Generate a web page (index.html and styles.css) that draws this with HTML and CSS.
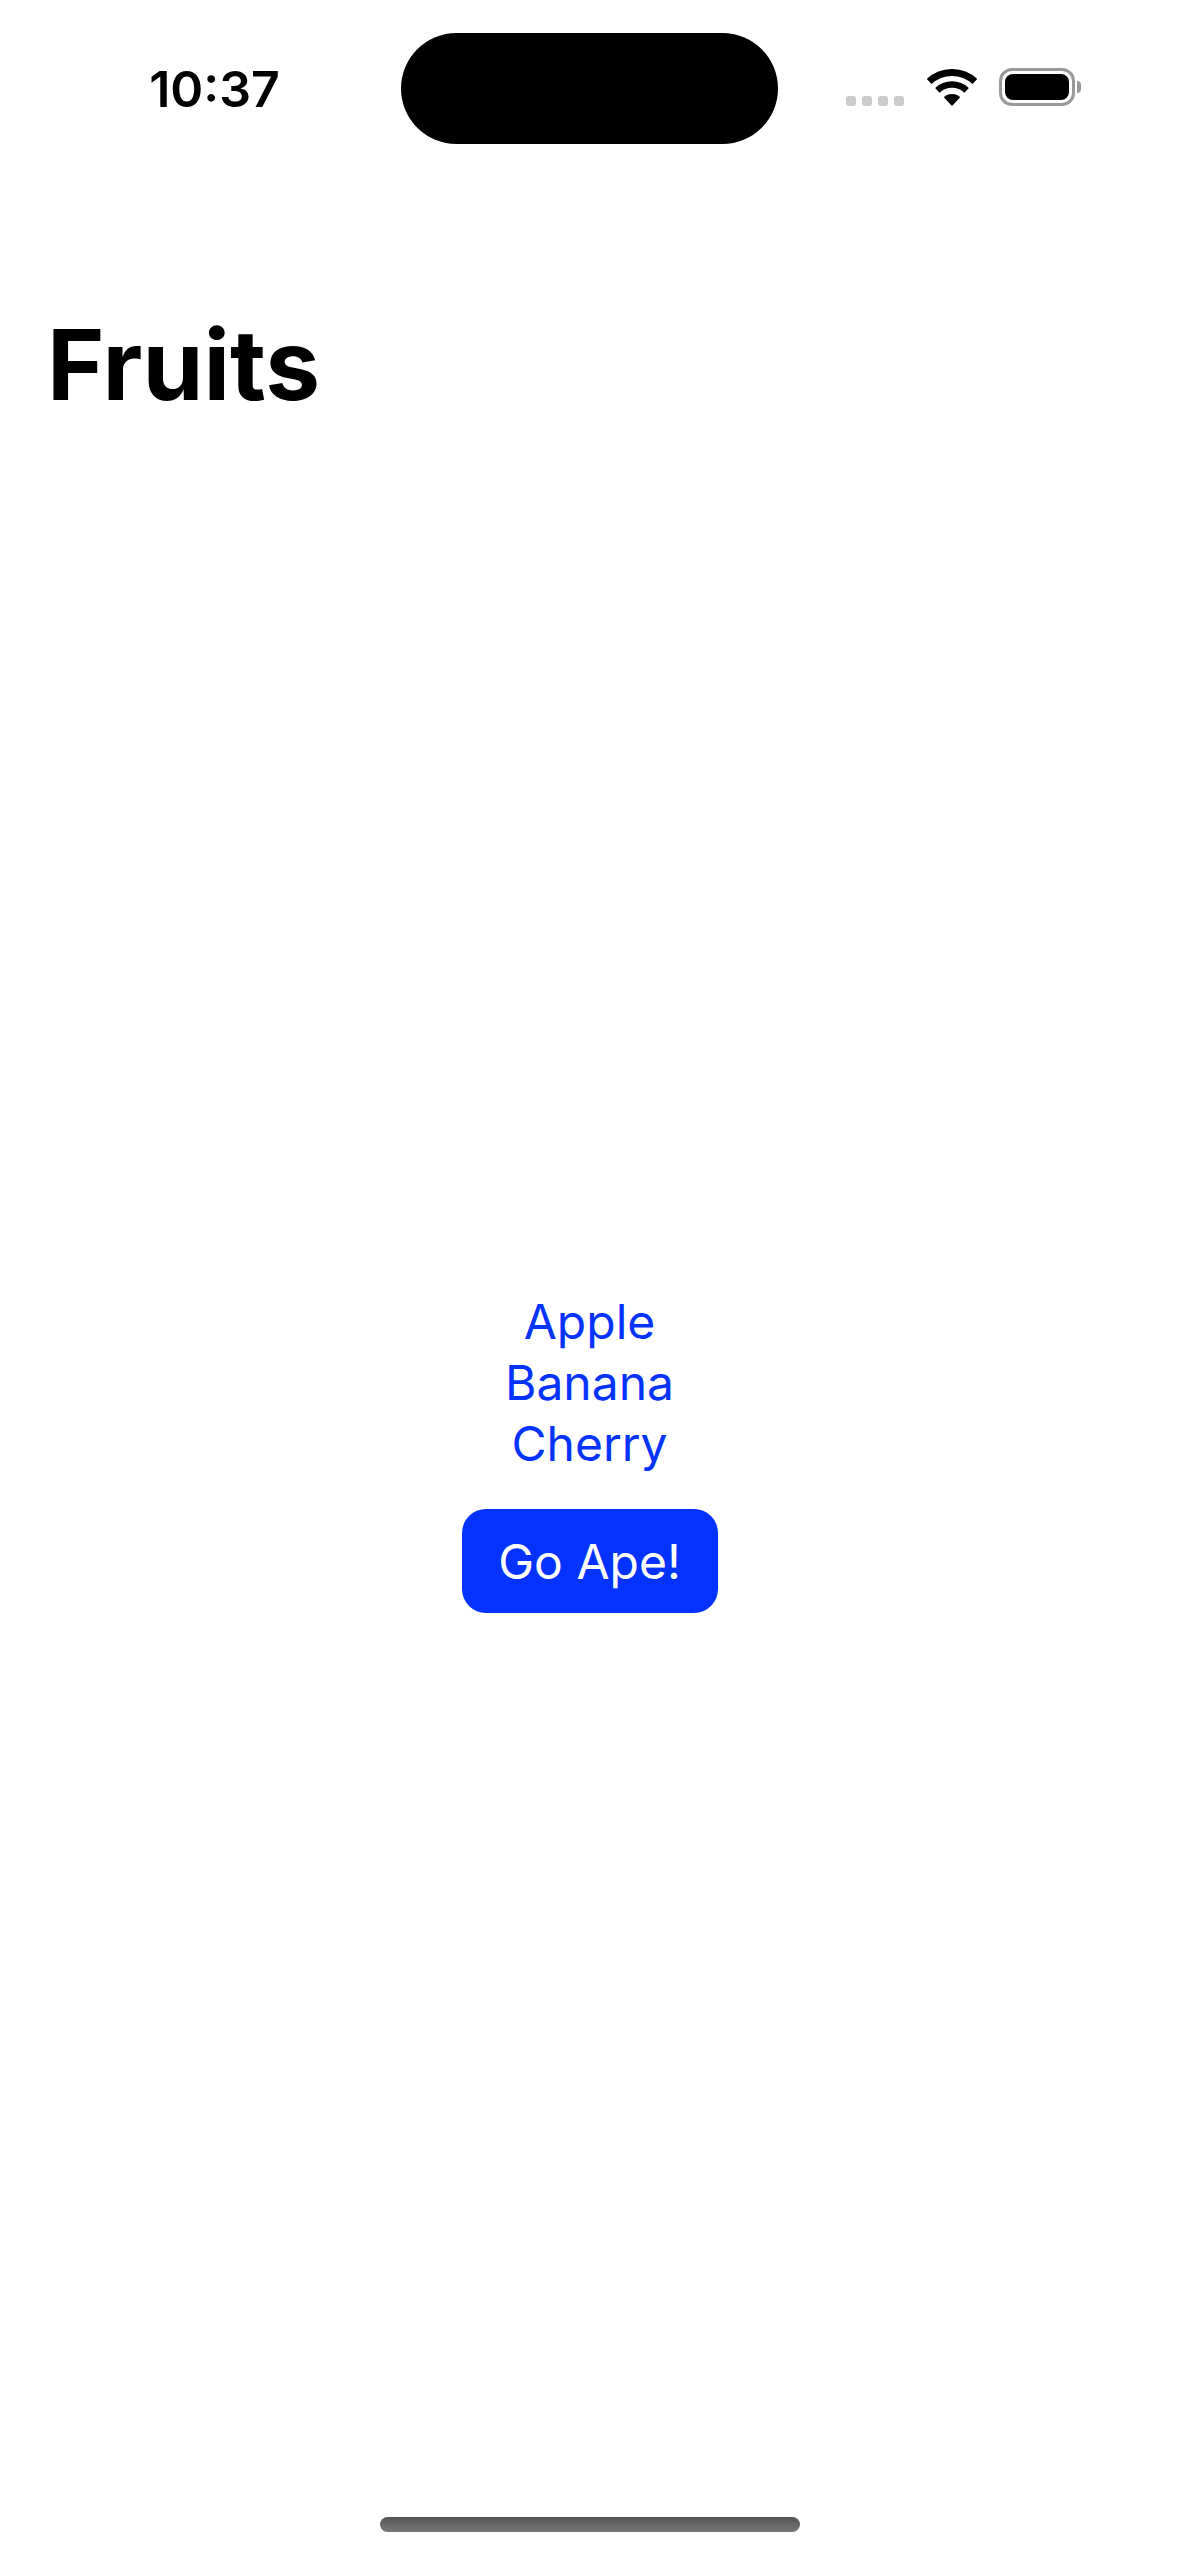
FILE: index.html
```html
<!DOCTYPE html>
<html lang="en">
<head>
  <meta charset="UTF-8">
  <meta name="viewport" content="width=device-width, initial-scale=1.0">
  <title>Fruits</title>
  <link rel="stylesheet" href="styles.css">
</head>
<body>
  <div class="page">
    <div class="status-bar">
      <div class="time">10:37</div>
      <div class="island"></div>
      <div class="status-icons">
        <div class="signal">
          <span class="dot"></span>
          <span class="dot"></span>
          <span class="dot"></span>
          <span class="dot"></span>
        </div>
        <svg class="wifi" viewBox="0 0 50 37" width="50" height="37">
          <path d="M2.15 12.5A33.5 33.5 0 0 1 47.85 12.5" fill="none" stroke="#000" stroke-width="7"/>
          <path d="M10.34 21.28A21.5 21.5 0 0 1 39.66 21.28" fill="none" stroke="#000" stroke-width="6.5"/>
          <path d="M25 37L16.8 28.2A12 12 0 0 1 33.2 28.2Z" fill="#000"/>
        </svg>
        <div class="battery">
          <div class="battery-body">
            <div class="battery-level"></div>
          </div>
          <div class="battery-cap"></div>
        </div>
      </div>
    </div>

    <h1 class="title">Fruits</h1>

    <div class="content">
      <div class="fruit-list">
        <div class="fruit">Apple</div>
        <div class="fruit">Banana</div>
        <div class="fruit">Cherry</div>
      </div>
      <button class="button">Go Ape!</button>
    </div>

    <div class="home-bar"></div>
  </div>
</body>
</html>
```

FILE: styles.css
```css
body {
  margin: 0;
  background-color: #fff;
  color: #000;
  font-family: Inter, 'Liberation Sans', sans-serif;
}

.page {
  display: flex;
  flex-direction: column;
  height: 2556px;
  overflow: hidden;
}

.status-bar {
  display: flex;
  align-items: flex-start;
  padding-top: 33px;
}

.time {
  width: 401px;
  box-sizing: border-box;
  padding: 26px 0 0 28px;
  text-align: center;
  font-size: 50px;
  line-height: 60px;
  font-weight: 600;
}

.island {
  width: 377px;
  height: 111px;
  background-color: #000;
  border-radius: 56px;
}

.status-icons {
  display: flex;
  align-items: flex-end;
  height: 73px;
  padding-left: 68px;
}

.signal {
  display: flex;
  gap: 6px;
  margin-right: 23px;
}

.dot {
  width: 10px;
  height: 10px;
  border-radius: 3px;
  background-color: #ccc;
}

.wifi {
  display: block;
  margin-right: 22px;
}

.battery {
  display: flex;
  align-items: center;
  gap: 2px;
}

.battery-body {
  box-sizing: border-box;
  width: 76px;
  height: 38px;
  padding: 3px;
  border: 3px solid #999;
  border-radius: 13px;
}

.battery-level {
  height: 100%;
  background-color: #000;
  border-radius: 8px;
}

.battery-cap {
  width: 4px;
  height: 12px;
  background-color: #999;
  border-radius: 0 4px 4px 0;
}

.title {
  margin: 0;
  padding: 159px 0 0 47px;
  font-size: 98px;
  line-height: 124px;
  font-weight: 700;
}

.content {
  flex: 1;
  display: flex;
  flex-direction: column;
  align-items: center;
  justify-content: center;
  gap: 35px;
  padding-bottom: 6px;
}

.fruit-list {
  text-align: center;
  color: #0433ff;
  font-size: 48px;
  line-height: 61px;
}

.button {
  width: 256px;
  height: 104px;
  padding: 0;
  border: none;
  border-radius: 24px;
  background-color: #0433ff;
  color: #fff;
  font-family: inherit;
  font-size: 48px;
}

.home-bar {
  flex-shrink: 0;
  width: 420px;
  height: 15px;
  margin: 34px auto 24px;
  border-radius: 8px;
  background: linear-gradient(to bottom, #555, #777);
}
```
